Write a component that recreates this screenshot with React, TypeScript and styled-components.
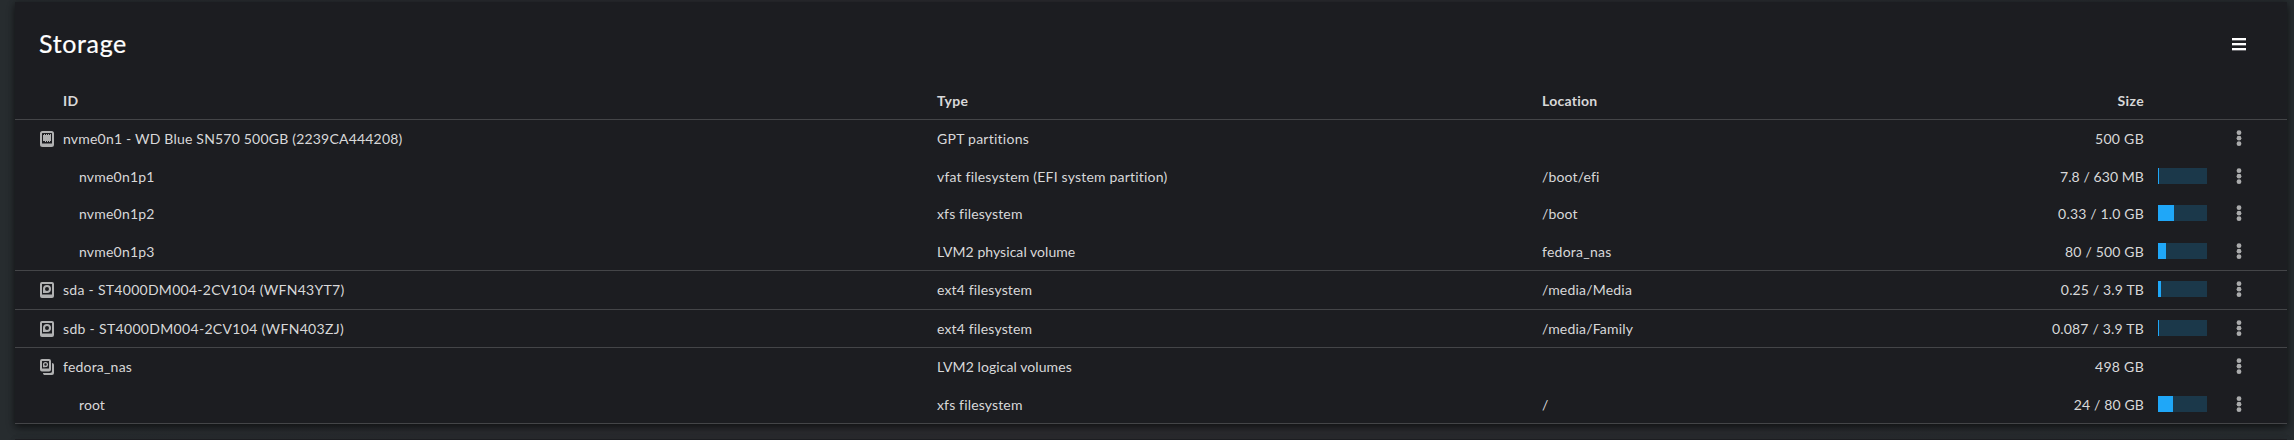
import React from "react";
import styled, { createGlobalStyle } from "styled-components";

const GlobalStyle = createGlobalStyle`
  * { box-sizing: border-box; }
  html, body { margin: 0; height: 100%; overflow: hidden; }
  body {
    background: linear-gradient(90deg, #272c2f 0%, #292b2f 20%, #2b2b2f 45%, #292b2f 75%, #272c2f 100%);
    color: #d8d8d9;
    font-family: "Lato", "Liberation Sans", sans-serif;
    font-size: 14px;
    line-height: 21px;
  }
`;

const Page = styled.main`
  height: 440px;
  overflow: hidden;
  padding: 2px 7px 0 15px;
  display: flex;
  flex-direction: column;
  gap: 15px;
`;

const Card = styled.section`
  flex: none;
  min-height: 1px;
  background: #1c1d21;
  box-shadow: 0 4px 8px rgba(3, 3, 3, 0.48), 0 0 6px rgba(3, 3, 3, 0.24);
`;

const CardHeader = styled.header`
  display: flex;
  justify-content: space-between;
  align-items: flex-start;
  height: 80px;
  padding: 26px 41px 0 24px;
`;

const Title = styled.h2`
  margin: 0;
  color: #fff;
  font-size: 25px;
  font-weight: 400;
  line-height: 30px;
  letter-spacing: 0.65px;
  -webkit-text-stroke: 0.2px #fff;
`;

const MenuButton = styled.button`
  display: flex;
  margin-top: 10px;
  padding: 0;
  border: 0;
  background: none;
`;

const Row = styled.div<{ $height: number; $divider?: boolean }>`
  display: grid;
  grid-template-columns: 48px 874px 605px 400px 202px 63px 1fr;
  align-items: start;
  height: ${p => p.$height}px;
  padding-top: 8px;
  border-bottom: ${p => (p.$divider ? "1px solid #444548" : "0")};
`;

const IconCell = styled.div`
  display: flex;
  padding: 3px 0 0 25px;
`;

const Cell = styled.div<{ $track?: number; $indent?: boolean; $end?: boolean }>`
  white-space: nowrap;
  letter-spacing: ${p => p.$track ?? 0.25}px;
  padding-left: ${p => (p.$indent ? 16 : 0)}px;
  text-align: ${p => (p.$end ? "right" : "left")};
`;

const HeadCell = styled(Cell)`
  font-weight: 700;
`;

const UsageCell = styled.div`
  padding: 2px 0 0 14px;
`;

const Usage = styled.div`
  width: 49px;
  height: 16px;
  background: #1b384a;
`;

const UsageFill = styled.div`
  height: 100%;
  background: #1fa7f8;
`;

const KebabCell = styled.div`
  display: flex;
  padding: 2px 0 0 29px;
`;

const DriveIcon = ({ kind }: { kind: Kind }) => (
  <svg width="14" height="16" viewBox="0 0 14 16" fill="#b0b1b2" stroke="none">
    {kind === "ssd" && (
      <>
        <rect x="1" y="1" width="12" height="14" rx="1.5" fill="none" stroke="#b0b1b2" strokeWidth="2" />
        <path d="M2 12.5h10v2H2z" />
        <path d="M3 4h1V3h1v1h1V3h1v1h1V3h1v1h1V3h1v7h-1v1H9v-1H8v1H7v-1H6v1H5v-1H3z" />
      </>
    )}
    {kind === "hdd" && (
      <>
        <path d="M2 0h10a2 2 0 0 1 2 2v12a2 2 0 0 1-2 2H2a2 2 0 0 1-2-2V2a2 2 0 0 1 2-2zM2 2v10.5h10V2z" fillRule="evenodd" />
        <circle cx="7" cy="7" r="3" fill="none" stroke="#b0b1b2" strokeWidth="2" />
        <path d="M3 7L7 11H3z" />
      </>
    )}
    {kind === "group" && (
      <>
        <path d="M12 4c1.2 0 2 .8 2 2v8a2 2 0 0 1-2 2H5c-1.2 0-2-.8-2-1.8V14h7c1.5 0 2-.8 2-2z" />
        <path d="M2 0h7a2 2 0 0 1 2 2v8.5a2 2 0 0 1-2 2H2a2 2 0 0 1-2-2V2a2 2 0 0 1 2-2zM2 2v7.5h7V2z" fillRule="evenodd" />
        <circle cx="5.5" cy="5.5" r="1.9" fill="none" stroke="#b0b1b2" strokeWidth="1.3" />
        <path d="M3 5.5L5.5 8.2H3z" />
      </>
    )}
  </svg>
);

const Kebab = () => (
  <svg width="6" height="17" viewBox="0 0 6 17" fill="#aaabac">
    <circle cx="3" cy="2.7" r="2.4" />
    <circle cx="3" cy="8.2" r="2.4" />
    <circle cx="3" cy="13.7" r="2.4" />
  </svg>
);

type Kind = "ssd" | "hdd" | "group";
type Label = [text: string, track?: number];

interface Entry {
  icon?: Kind;
  id: Label;
  type: Label;
  location?: Label;
  size: Label;
  used?: number;
  height: number;
  divider?: boolean;
}

const entries: Entry[] = [
  { icon: "ssd", id: ["nvme0n1 - WD Blue SN570 500GB (2239CA444208)", 0.2], type: ["GPT partitions", 0.25], size: ["500 GB", 0.3], height: 38 },
  { id: ["nvme0n1p1", 0.2], type: ["vfat filesystem (EFI system partition)", 0.2], location: ["/boot/efi", 0.15], size: ["7.8 / 630 MB", 0.08], used: 1, height: 37 },
  { id: ["nvme0n1p2", 0.2], type: ["xfs filesystem", 0.15], location: ["/boot", 0.15], size: ["0.33 / 1.0 GB", 0.18], used: 16, height: 38 },
  { id: ["nvme0n1p3", 0.2], type: ["LVM2 physical volume", 0.05], location: ["fedora_nas", 0.25], size: ["80 / 500 GB", 0.18], used: 8, height: 38, divider: true },
  { icon: "hdd", id: ["sda - ST4000DM004-2CV104 (WFN43YT7)", 0.28], type: ["ext4 filesystem", 0.15], location: ["/media/Media", 0.2], size: ["0.25 / 3.9 TB", 0.15], used: 3, height: 39, divider: true },
  { icon: "hdd", id: ["sdb - ST4000DM004-2CV104 (WFN403ZJ)", 0.32], type: ["ext4 filesystem", 0.15], location: ["/media/Family", 0.2], size: ["0.087 / 3.9 TB", 0.2], used: 1, height: 38, divider: true },
  { icon: "group", id: ["fedora_nas", 0.2], type: ["LVM2 logical volumes", 0.08], size: ["498 GB", 0.3], height: 38 },
  { id: ["root", 0.1], type: ["xfs filesystem", 0.15], location: ["/", 0], size: ["24 / 80 GB", 0.15], used: 15, height: 38, divider: true },
];

export default function App() {
  return (
    <>
      <GlobalStyle />
      <Page>
        <Card>
          <CardHeader>
            <Title>Storage</Title>
            <MenuButton aria-label="Storage menu">
              <svg width="14" height="13" viewBox="0 0 14 13">
                <path d="M0 0h14v2H0zM0 5h14v2H0zM0 10h14v2H0z" fill="#fff" />
                <path d="M0 2h14v1H0zM0 7h14v1H0zM0 12h14v1H0z" fill="#69696d" />
              </svg>
            </MenuButton>
          </CardHeader>
          <Row $height={38} $divider>
            <span />
            <HeadCell>ID</HeadCell>
            <HeadCell $track={0.35}>Type</HeadCell>
            <HeadCell>Location</HeadCell>
            <HeadCell $track={0.35} $end>Size</HeadCell>
          </Row>
          {entries.map(e => (
            <Row key={e.id[0]} $height={e.height} $divider={e.divider}>
              <IconCell>{e.icon && <DriveIcon kind={e.icon} />}</IconCell>
              <Cell $track={e.id[1]} $indent={!e.icon}>{e.id[0]}</Cell>
              <Cell $track={e.type[1]}>{e.type[0]}</Cell>
              <Cell $track={e.location?.[1]}>{e.location?.[0]}</Cell>
              <Cell $track={e.size[1]} $end>{e.size[0]}</Cell>
              <UsageCell>
                {e.used !== undefined && (
                  <Usage>
                    <UsageFill style={{ width: e.used }} />
                  </Usage>
                )}
              </UsageCell>
              <KebabCell><Kebab /></KebabCell>
            </Row>
          ))}
        </Card>
        <Card />
      </Page>
    </>
  );
}
